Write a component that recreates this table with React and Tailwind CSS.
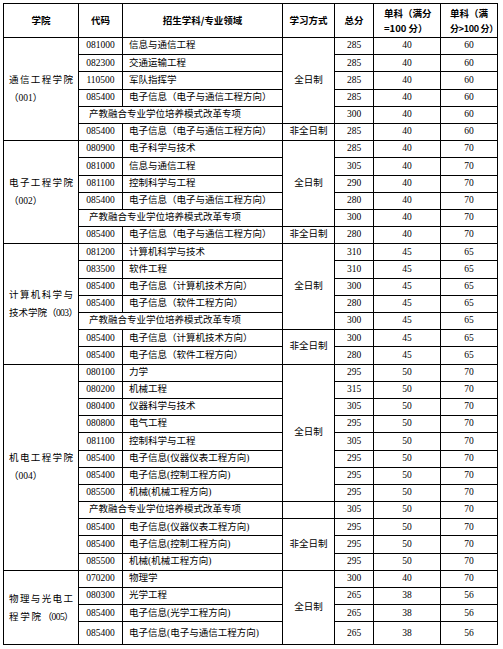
import React from "react";

const groups = [
  {
    school: [["通", "信", "工", "程", "学", "院"], ["（001）"]],
    rows: [
      { code: "081000", name: "信息与通信工程", t: "285", a: "40", b: "60", mode: "全日制", span: 5 },
      { code: "082300", name: "交通运输工程", t: "285", a: "40", b: "60" },
      { code: "110500", name: "军队指挥学", t: "285", a: "40", b: "60" },
      { code: "085400", name: "电子信息（电子与通信工程方向）", t: "285", a: "40", b: "60" },
      { special: true, t: "300", a: "40", b: "60" },
      { code: "085400", name: "电子信息（电子与通信工程方向）", t: "285", a: "40", b: "60", mode: "非全日制", span: 1 },
    ],
  },
  {
    school: [["电", "子", "工", "程", "学", "院"], ["（002）"]],
    rows: [
      { code: "080900", name: "电子科学与技术", t: "285", a: "40", b: "70", mode: "全日制", span: 5 },
      { code: "081000", name: "信息与通信工程", t: "305", a: "40", b: "70" },
      { code: "081100", name: "控制科学与工程", t: "290", a: "40", b: "70" },
      { code: "085400", name: "电子信息（电子与通信工程方向）", t: "280", a: "40", b: "70" },
      { special: true, t: "300", a: "40", b: "70" },
      { code: "085400", name: "电子信息（电子与通信工程方向）", t: "280", a: "40", b: "70", mode: "非全日制", span: 1 },
    ],
  },
  {
    school: [["计", "算", "机", "科", "学", "与"], ["技", "术", "学", "院", "（003）"]],
    rows: [
      { code: "081200", name: "计算机科学与技术", t: "310", a: "45", b: "65", mode: "全日制", span: 5 },
      { code: "083500", name: "软件工程", t: "310", a: "45", b: "65" },
      { code: "085400", name: "电子信息（计算机技术方向）", t: "300", a: "45", b: "65" },
      { code: "085400", name: "电子信息（软件工程方向）", t: "280", a: "45", b: "65" },
      { special: true, t: "300", a: "45", b: "65" },
      { code: "085400", name: "电子信息（计算机技术方向）", t: "300", a: "45", b: "65", mode: "非全日制", span: 2 },
      { code: "085400", name: "电子信息（软件工程方向）", t: "280", a: "45", b: "65" },
    ],
  },
  {
    school: [["机", "电", "工", "程", "学", "院"], ["（004）"]],
    rows: [
      { code: "080100", name: "力学", t: "295", a: "50", b: "70", mode: "全日制", span: 8 },
      { code: "080200", name: "机械工程", t: "315", a: "50", b: "70" },
      { code: "080400", name: "仪器科学与技术", t: "305", a: "50", b: "70" },
      { code: "080800", name: "电气工程", t: "295", a: "50", b: "70" },
      { code: "081100", name: "控制科学与工程", t: "305", a: "50", b: "70" },
      { code: "085400", name: "电子信息(仪器仪表工程方向)", t: "295", a: "50", b: "70" },
      { code: "085400", name: "电子信息(控制工程方向)", t: "295", a: "50", b: "70" },
      { code: "085500", name: "机械(机械工程方向)", t: "295", a: "50", b: "70" },
      { special: true, t: "305", a: "50", b: "70", mode: "", span: 1 },
      { code: "085400", name: "电子信息(仪器仪表工程方向)", t: "295", a: "50", b: "70", mode: "非全日制", span: 3 },
      { code: "085400", name: "电子信息(控制工程方向)", t: "295", a: "50", b: "70" },
      { code: "085500", name: "机械(机械工程方向)", t: "295", a: "50", b: "70" },
    ],
  },
  {
    school: [["物", "理", "与", "光", "电", "工"], ["程", "学", "院", "（005）"]],
    rows: [
      { code: "070200", name: "物理学", t: "300", a: "40", b: "70", mode: "全日制", span: 4 },
      { code: "080300", name: "光学工程", t: "265", a: "38", b: "56" },
      { code: "085400", name: "电子信息(光学工程方向)", t: "265", a: "38", b: "56" },
      { code: "085400", name: "电子信息(电子与通信工程方向)", t: "265", a: "38", b: "56", last: true },
    ],
  },
];

const cell = "border border-black p-0 align-middle";

function School({ lines }) {
  return (
    <div className="px-[5px] flex flex-col">
      {lines.map((l, i) =>
        l.length > 1 ? (
          <div key={i} className="flex justify-between leading-[18px]">
            {l.map((c, j) => (
              <span key={j} className={c.length > 1 ? "tracking-[-0.6px]" : ""}>{c}</span>
            ))}
          </div>
        ) : (
          <div key={i} className="leading-[18px] text-left">{l[0]}</div>
        )
      )}
    </div>
  );
}

export default function App() {
  return (
    <div className="w-[503px] h-[649px] bg-white overflow-hidden pt-[3px] pl-[3px]">
      <table className="border-collapse table-fixed w-[494px] text-black text-[9.5px] font-['Liberation_Serif','Noto_Sans_CJK_SC',serif]">
        <colgroup>
          <col className="w-[75px]" />
          <col className="w-[44px]" />
          <col className="w-[160px]" />
          <col className="w-[52px]" />
          <col className="w-[39px]" />
          <col className="w-[67px]" />
          <col className="w-[57px]" />
        </colgroup>
        <thead>
          <tr className="h-[34px] font-bold font-['Noto_Sans_CJK_SC',sans-serif] whitespace-nowrap">
            <th className={cell + " text-center"}>学院</th>
            <th className={cell + " text-center"}>代码</th>
            <th className={cell + " text-center"}>招生学科/专业领域</th>
            <th className={cell + " text-center"}>学习方式</th>
            <th className={cell + " text-center"}>总分</th>
            <th className={cell + " text-left pl-[10px] leading-[15px]"}>
              <div>单科（满分</div>
              <div>=100 分）</div>
            </th>
            <th className={cell + " text-left pl-[9px] leading-[15px]"}>
              <div>单科（满</div>
              <div className="text-[9px] tracking-[-0.3px]">分&gt;100 分）</div>
            </th>
          </tr>
        </thead>
        <tbody>
          {groups.map((g, gi) =>
            g.rows.map((r, ri) => (
              <tr key={gi + "-" + ri} className={r.last ? "h-[23px]" : "h-[17.2px]"}>
                {ri === 0 && (
                  <td rowSpan={g.rows.length} className={cell}>
                    <School lines={g.school} />
                  </td>
                )}
                {r.special ? (
                  <td colSpan={2} className={cell + " text-left pl-[10px] leading-none"}>
                    产教融合专业学位培养模式改革专项
                  </td>
                ) : (
                  <>
                    <td className={cell + " text-center leading-none"}>{r.code}</td>
                    <td className={cell + " text-left pl-[6px] leading-none whitespace-nowrap"}>{r.name}</td>
                  </>
                )}
                {r.mode !== undefined && (
                  <td rowSpan={r.span} className={cell + " text-center leading-none"}>
                    {r.mode}
                  </td>
                )}
                <td className={cell + " text-center leading-none"}>{r.t}</td>
                <td className={cell + " text-center leading-none"}>{r.a}</td>
                <td className={cell + " text-center leading-none"}>{r.b}</td>
              </tr>
            ))
          )}
        </tbody>
      </table>
    </div>
  );
}
